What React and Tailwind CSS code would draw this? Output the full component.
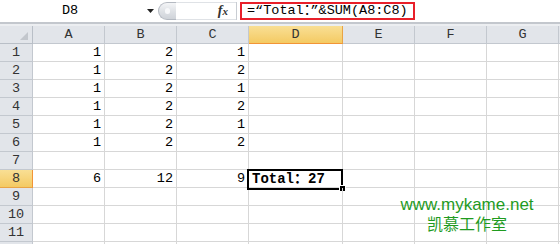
const COLS = [
  { k: "A", w: 72 },
  { k: "B", w: 72 },
  { k: "C", w: 72 },
  { k: "D", w: 94 },
  { k: "E", w: 72 },
  { k: "F", w: 72 },
  { k: "G", w: 72 },
];

const ROWS = [
  ["1", "2", "1"],
  ["1", "2", "2"],
  ["1", "2", "1"],
  ["1", "2", "2"],
  ["1", "2", "1"],
  ["1", "2", "2"],
  [],
  ["6", "12", "9"],
  [],
  [],
  [],
  [],
];

const mono = { fontFamily: '"Liberation Mono", "Noto Sans CJK SC", monospace' };

function FormulaBar() {
  return (
    <div className="flex h-[22px] items-center bg-white" style={mono}>
      <div className="w-[140px] text-center text-[13.5px] text-black leading-none">D8</div>
      <svg width="7" height="4" viewBox="0 0 7 4" className="ml-[7px]">
        <polygon points="0,0 7,0 3.5,4" fill="#222" />
      </svg>
      {/* splitter knob */}
      <div className="ml-[4px] h-[18px] w-[18px] rounded-l-full border border-r-0 border-[#b4b9c1] bg-gradient-to-b from-[#f4f5f7] via-[#dfe2e6] to-[#cfd3d9] flex items-center justify-center">
        <div className="h-[6px] w-[5px] rounded-full bg-[#f7f8fa]" />
      </div>
      <div className="flex-none w-[60px] h-[18px] flex items-center justify-end pr-[8px] border-y border-[#dfe2e6]">
        <span className="italic font-bold text-[14px] text-[#333] leading-none" style={{ fontFamily: '"Liberation Serif", serif' }}>
          f<span className="text-[11px]">x</span>
        </span>
      </div>
      <div className="w-px h-[18px] bg-[#c9cdd3]" />
      <div className="ml-[3px] w-[175px] h-[18px] border-2 border-[#e8202a] flex items-center pl-[5px] text-[13.5px] text-black leading-none whitespace-nowrap">
        =“Total：”&amp;SUM(A8:C8)
      </div>
      <div className="flex-1" />
    </div>
  );
}

export default function App() {
  return (
    <div className="relative w-[560px] h-[244px] overflow-hidden bg-white">
      <FormulaBar />
      <div className="h-[2px] bg-[#c3c7cd]" />
      <div className="h-[2px] bg-[#eceef1]" />

      {/* column header */}
      <div className="grid grid-cols-[33px_72px_72px_72px_94px_72px_72px_72px_1fr] h-[18px] text-[13.5px] text-[#333]" style={mono}>
        <div className="relative bg-[#e2e5ea] border-r border-b border-[#b9bfc7]">
          <svg width="8" height="8" viewBox="0 0 8 8" className="absolute left-[20px] top-[6px]">
            <polygon points="8,0 8,8 0,8" fill="#c2c6cc" />
          </svg>
        </div>
        {COLS.map((c) =>
          c.k === "D" ? (
            <div key={c.k} className="flex items-center justify-center bg-gradient-to-b from-[#f9df94] to-[#f4ca62] border-r border-b border-r-[#e9a445] border-b-[#f29436] leading-none">
              {c.k}
            </div>
          ) : (
            <div key={c.k} className="flex items-center justify-center bg-[#e2e5ea] border-r border-b border-[#c3c8cf] leading-none">
              {c.k}
            </div>
          )
        )}
        <div className="bg-[#e2e5ea] border-b border-[#c3c8cf]" />
      </div>

      {/* rows */}
      {ROWS.map((r, i) => {
        const n = i + 1;
        const active = n === 8;
        return (
          <div key={n} className="grid grid-cols-[33px_72px_72px_72px_94px_72px_72px_72px_1fr] h-[18px] text-[13.5px]" style={mono}>
            <div
              className={
                active
                  ? "flex items-center justify-center bg-gradient-to-b from-[#f9df94] to-[#f4ca62] border-r border-b border-r-[#f29436] border-b-[#e9a445] text-[#333] leading-none"
                  : "flex items-center justify-center bg-[#e2e5ea] border-r border-b border-[#c3c8cf] text-[#333] leading-none"
              }
            >
              {n < 12 ? n : ""}
            </div>
            {[0, 1, 2].map((j) => (
              <div key={j} className="flex items-center justify-end pr-[3px] border-r border-b border-[#d7d7d7] text-black leading-none">
                {r[j] || ""}
              </div>
            ))}
            <div className="relative flex items-center pl-[3px] border-r border-b border-[#d7d7d7] text-black leading-none">
              {active && (
                <>
                  <span className="font-bold text-[14px]">Total：27</span>
                  <div className="absolute -left-[2px] -top-[1px] w-[96px] h-[21px] border-2 border-black" />
                  <div className="absolute left-[90px] top-[15px] w-[7px] h-[7px] bg-black border border-white" />
                </>
              )}
            </div>
            {[0, 1, 2].map((j) => (
              <div key={j} className="border-r border-b border-[#d7d7d7]" />
            ))}
            <div className="border-b border-[#d7d7d7]" />
          </div>
        );
      })}

      {/* watermark */}
      <div className="absolute left-[397px] top-[196px] w-[140px] text-center text-[#1f9b1f]">
        <div className="text-[17px] leading-[17px]" style={{ fontFamily: '"Liberation Sans", Arial, sans-serif' }}>
          www.mykame.net
        </div>
        <div className="mt-[2px] text-[16px] leading-[16px]" style={{ fontFamily: '"Noto Sans CJK SC", sans-serif' }}>
          凯慕工作室
        </div>
      </div>
    </div>
  );
}
